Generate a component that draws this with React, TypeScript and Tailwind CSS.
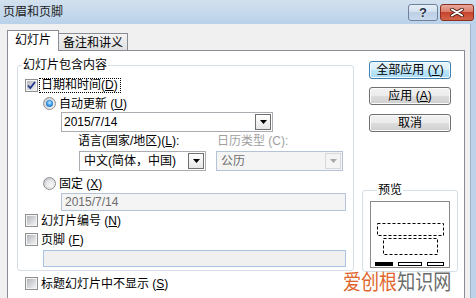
import React from 'react';

// accelerator key, e.g. (D)
const Key = ({ k }: { k: string }) => (
  <>
    (<span className="underline underline-offset-[1px]">{k}</span>)
  </>
);

const CheckBox = ({ checked = false }: { checked?: boolean }) => (
  <span className="relative flex h-[13px] w-[13px] shrink-0 items-center justify-center border border-[#8e8f8f] bg-[#f4f4f4]">
    <span className="h-[9px] w-[9px] bg-gradient-to-br from-[#b3b7bc] to-[#f3f3f3]" />
    {checked && (
      <svg className="absolute left-0 top-0" width="11" height="11" viewBox="0 0 11 11">
        <path d="M2 5.5 L4.3 8 L9 2" fill="none" stroke="#22358a" strokeWidth="1.8" />
      </svg>
    )}
  </span>
);

const Radio = ({ checked = false }: { checked?: boolean }) => (
  <span className="flex h-[13px] w-[13px] shrink-0 items-center justify-center rounded-full border border-[#8e8f8f] bg-gradient-to-br from-[#c4c7cc] to-[#f7f7f7]">
    {checked ? (
      <span className="h-[7px] w-[7px] rounded-full bg-[radial-gradient(circle_at_50%_40%,#c6efff,#3a9be6_45%,#135aa8)]" />
    ) : (
      <span className="h-[7px] w-[7px] rounded-full bg-gradient-to-br from-[#dfe1e3] to-[#fbfbfb]" />
    )}
  </span>
);

const DropButton = ({ disabled = false }: { disabled?: boolean }) => (
  <span
    className={
      disabled
        ? 'mr-[1px] flex h-[16px] w-[16px] items-center justify-center border border-[#d5d9dd] bg-[#f4f4f4]'
        : 'mr-[1px] flex h-[16px] w-[16px] items-center justify-center border border-[#707070] bg-gradient-to-b from-[#ffffff] to-[#e6e6e6]'
    }
  >
    <svg width="7" height="4" viewBox="0 0 7 4">
      <path d="M0 0 H7 L3.5 4 Z" fill={disabled ? '#a7a7a7' : '#000'} />
    </svg>
  </span>
);

const Button = ({ children, primary = false }: { children: React.ReactNode; primary?: boolean }) => (
  <button
    className={
      primary
        ? 'flex h-[18px] w-[82px] items-center justify-center rounded-[3px] border border-[#3c7fb1] bg-[linear-gradient(#e9f6fd,#d8effc_50%,#bee6fd_50%,#a9dbf6)] shadow-[inset_0_0_0_1px_#f2fbff]'
        : 'flex h-[18px] w-[82px] items-center justify-center rounded-[3px] border border-[#707070] bg-[linear-gradient(#f2f2f2,#ebebeb_50%,#dddddd_50%,#cfcfcf)] shadow-[inset_0_0_0_1px_#fbfbfb]'
    }
  >
    {children}
  </button>
);

export default function App() {
  return (
    <div className="relative h-[298px] w-[476px] overflow-hidden bg-[#f0f0f0] text-[12px] leading-[12px] text-black font-['Liberation_Sans','Noto_Sans_CJK_SC',sans-serif]">
      {/* title bar */}
      <div className="flex h-[24px] items-start bg-gradient-to-b from-[#d3e1ef] to-[#b9d1ea]">
        <span className="ml-[3px] mt-[6px] text-[#1b1b1b]">页眉和页脚</span>
        <div className="ml-auto mr-[2px] mt-[4px] flex gap-[2px]">
          <span className="flex h-[17px] w-[30px] items-center justify-center rounded-[3px] border border-[#6f819a] bg-[linear-gradient(#e6eef7,#d2dfee_50%,#bccfe5_50%,#c9d9ec)] text-[13px] font-bold text-[#1f2e44] [text-shadow:0_0_2px_#ffffff]">
            ?
          </span>
          <span className="flex h-[17px] w-[34px] items-center justify-center rounded-[3px] border border-[#8b2f20] bg-[linear-gradient(#e9a99a,#d87966_50%,#c7432d_50%,#d2654b)]">
            <svg width="14" height="9" viewBox="0 0 14 9">
              <path d="M2 1.5 L12 7.5 M12 1.5 L2 7.5" stroke="#4a1a12" strokeWidth="3.6" strokeLinecap="round" />
              <path d="M2 1.5 L12 7.5 M12 1.5 L2 7.5" stroke="#ffffff" strokeWidth="2" strokeLinecap="round" />
            </svg>
          </span>
        </div>
      </div>

      <div className="flex">
        <div className="pl-[7px] pt-[6px]">
          {/* tabs */}
          <div className="flex items-end">
            <div className="relative z-10 -mb-px h-[21px] w-[52px] border-x border-t border-[#898c95] bg-white pt-[3px] text-center">
              幻灯片
            </div>
            <div className="h-[17px] w-[69px] border-r border-t border-[#898c95] bg-gradient-to-b from-[#f3f3f3] to-[#e0e0e0] pt-[3px] text-center">
              备注和讲义
            </div>
          </div>

          {/* panel */}
          <div className="flex h-[250px] w-[458px] border border-[#898c95] bg-white">
            {/* left column */}
            <div className="pl-[9px]">
              <fieldset className="mt-[8px] w-[337px] rounded-[3px] border border-[#d5dfe5] pb-[3px]">
                <legend className="ml-[4px] px-[1px] leading-[12px]">幻灯片包含内容</legend>
                <div className="pl-[7px] pt-[7px]">
                  <div className="flex h-[15px] items-center">
                    <CheckBox checked />
                    <span className="ml-[1px] border border-dotted border-black pl-[1px] pr-[2px] leading-[13px]">
                      日期和时间<Key k="D" />
                    </span>
                  </div>
                  <div className="ml-[18px] mt-[4px] flex items-center">
                    <Radio checked />
                    <span className="ml-[3px]">
                      自动更新 <Key k="U" />
                    </span>
                  </div>
                  <div className="ml-[36px] mt-[2px] flex h-[20px] w-[212px] items-center border border-[#abadb3] bg-white">
                    <span className="flex-1 pl-[2px]">2015/7/14</span>
                    <DropButton />
                  </div>
                  <div className="ml-[53px] mt-[3px] flex">
                    <span className="w-[139px]">
                      语言(国家/地区)<Key k="L" />:
                    </span>
                    <span className="text-[#a0a0a0]">日历类型 (C):</span>
                  </div>
                  <div className="ml-[54px] mt-[4px] flex gap-[10px]">
                    <div className="flex h-[20px] w-[127px] items-center border border-[#abadb3] bg-white">
                      <span className="flex-1 pl-[4px]">中文(简体，中国)</span>
                      <DropButton />
                    </div>
                    <div className="flex h-[20px] w-[127px] items-center border border-[#b4c4d6] bg-[#f4f4f4]">
                      <span className="flex-1 pl-[4px] text-[#6d6d6d]">公历</span>
                      <DropButton disabled />
                    </div>
                  </div>
                  <div className="ml-[18px] mt-[6px] flex items-center">
                    <Radio />
                    <span className="ml-[3px]">
                      固定 <Key k="X" />
                    </span>
                  </div>
                  <div className="ml-[36px] mt-[3px] flex h-[18px] w-[285px] items-center border border-[#b4c4d6] bg-[#f4f4f4] pl-[3px] text-[#6d6d6d]">
                    2015/7/14
                  </div>
                  <div className="mt-[3px] flex items-center">
                    <CheckBox />
                    <span className="ml-[3px]">
                      幻灯片编号 <Key k="N" />
                    </span>
                  </div>
                  <div className="mt-[6px] flex items-center">
                    <CheckBox />
                    <span className="ml-[3px]">
                      页脚 <Key k="F" />
                    </span>
                  </div>
                  <div className="ml-[18px] mt-[4px] h-[17px] w-[303px] border border-[#a9c4e0] bg-[#f0f0f0]" />
                </div>
              </fieldset>
              <div className="ml-[8px] mt-[6px] flex items-center">
                <CheckBox />
                <span className="ml-[3px]">
                  标题幻灯片中不显示 <Key k="S" />
                </span>
              </div>
            </div>

            {/* right column */}
            <div className="flex flex-col">
              <div className="ml-[15px] mt-[10px] flex flex-col">
                <Button primary>
                  全部应用 <Key k="Y" />
                </Button>
                <div className="mt-[8px]">
                  <Button>
                    应用 <Key k="A" />
                  </Button>
                </div>
                <div className="mt-[9px]">
                  <Button>取消</Button>
                </div>
              </div>
              <fieldset className="ml-[8px] mt-[52px] w-[96px] rounded-[3px] border border-[#d5dfe5] pb-[3px] pl-[7px] pt-[5px]">
                <legend className="ml-[7px] px-[1px] leading-[12px]">预览</legend>
                <svg width="80" height="67" viewBox="0 0 80 67" className="block">
                  <rect x="0.5" y="0.5" width="79" height="66" fill="#fff" stroke="#8a8a8a" />
                  <rect x="7.5" y="22.5" width="66" height="12" fill="none" stroke="#000" strokeDasharray="3 2" />
                  <rect x="13.5" y="37.5" width="54" height="16" fill="none" stroke="#000" strokeDasharray="3 2" />
                  <rect x="5" y="61" width="18" height="4" fill="#000" />
                  <rect x="28.5" y="61.5" width="23" height="3" fill="#fff" stroke="#000" />
                  <rect x="57.5" y="61.5" width="16" height="3" fill="#fff" stroke="#000" />
                </svg>
              </fieldset>
            </div>
          </div>
        </div>
        <div className="ml-auto h-[274px] w-[6px] border-l border-[#9fb3cb] bg-[#bed3ea]" />
      </div>

      {/* watermark */}
      <div className="absolute left-[343px] top-[268px] origin-left scale-x-[0.86] whitespace-nowrap text-[21px] leading-[24px] font-['Noto_Sans_CJK_SC',sans-serif]">
        <span className="text-[#e0652b]">爱创根</span>
        <span className="text-[#6b6b6b]">知识网</span>
      </div>
    </div>
  );
}
